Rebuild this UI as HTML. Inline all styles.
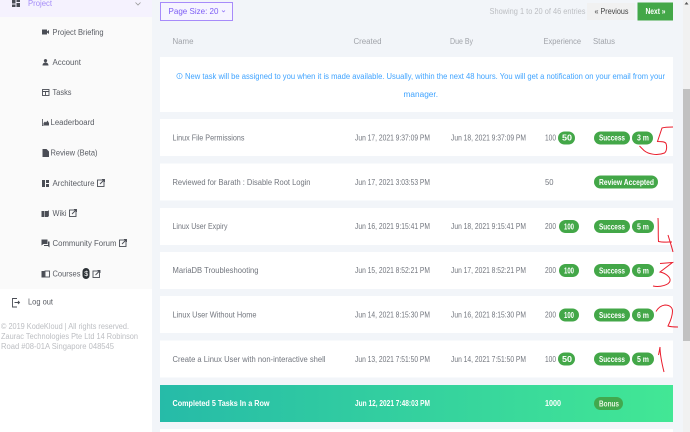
<!DOCTYPE html>
<html><head><meta charset="utf-8"><style>
html,body{margin:0;padding:0;width:690px;height:432px;overflow:hidden;background:#fff}
svg{display:block}
text{font-family:"Liberation Sans",sans-serif;font-size:8px}
.n{fill:#5a5d64}.g{fill:#72767e}.h{fill:#a0a3a9}.p{fill:#bcbec2}.w{fill:#fff;font-weight:bold}
.b{fill:#3fa3ff}.ic{fill:#4a4d55}.st{fill:none;stroke:#4a4d55;stroke-width:.9}
.red{fill:none;stroke:#ea1c2c;stroke-width:1}
</style></head><body>
<svg width="690" height="432" viewBox="0 0 690 432" xmlns="http://www.w3.org/2000/svg">
<defs><linearGradient id="gr" x1="0" x2="1" y1="0" y2="0"><stop offset="0" stop-color="#26bba8"/><stop offset="1" stop-color="#42e795"/></linearGradient></defs>
<rect width="690" height="432" fill="#fff"/>
<rect x="0" y="0" width="152" height="289" fill="#fafafa"/>
<rect x="0" y="0" width="152" height="17" fill="#f5f2fe"/>
<rect x="152" y="0" width="531" height="432" fill="#f2f5f9"/>
<rect x="683" y="0" width="7" height="432" fill="#f1f1f1"/>
<rect x="683" y="89" width="7" height="252" fill="#c1c1c1"/>
<path d="M684.5 4.5l2-2.500 2 2.500z" fill="#555"/>

<!-- sidebar -->
<path class="ic" d="M12 0h3.500v3.500h-3.500zM16.500 0h3.500v2h-3.500zM16.500 3h3.500v4h-3.500zM12 4.500h3.500v2.500h-3.500z"/>
<text x="28" y="6" textLength="24" lengthAdjust="spacingAndGlyphs" style="fill:#a48cf8">Project</text>
<path d="M135.500 2.500l2.500 2.500 2.500-2.500" fill="none" stroke="#999" stroke-width=".8"/>

<path class="ic" d="M42 29.500h5v5h-5zM47 31.500l2-1.500v4l-2-1.500z"/>
<text class="n" x="52.500" y="35" textLength="51" lengthAdjust="spacingAndGlyphs">Project Briefing</text>
<path class="ic" d="M45.500 59a1.700 1.700 0 1 1-.01 0zM42.500 65.500c0-4 6-4 6 0z"/>
<text class="n" x="52.500" y="65" textLength="28.500" lengthAdjust="spacingAndGlyphs">Account</text>
<rect class="st" x="42.500" y="89.500" width="6.500" height="6"/><path class="st" d="M42.500 91.500h6.500M45.500 91.500v4"/>
<text class="n" x="52.500" y="95" textLength="19" lengthAdjust="spacingAndGlyphs">Tasks</text>
<path class="ic" d="M42 119h.8v6.500H49v.5h-7zM43.500 125v-2l1.500-1.500 1 1 1.500-2 1.500 2.500v2z"/>
<text class="n" x="50.500" y="125" textLength="44" lengthAdjust="spacingAndGlyphs">Leaderboard</text>
<path class="ic" d="M42.500 149h4l2.500 2.500v5.500h-6.500z"/>
<text class="n" x="50.500" y="155.500" textLength="47" lengthAdjust="spacingAndGlyphs">Review (Beta)</text>
<path class="ic" d="M42 180h3v7h-3zM46 180h3v3h-3zM46 184h3v3h-3z"/>
<text class="n" x="52.500" y="186" textLength="42" lengthAdjust="spacingAndGlyphs">Architecture</text>
<rect class="st" x="97.500" y="180" width="6.500" height="6.500"/><path class="st" d="M100 184l4-4M102 179.500h2.500v2.500"/>
<path class="ic" d="M41.500 211h3v6h-3zM45 211h3v6h-3z"/><path class="st" d="M48.500 210.500v6"/>
<text class="n" x="52.500" y="216" textLength="14" lengthAdjust="spacingAndGlyphs">Wiki</text>
<rect class="st" x="69.500" y="210" width="6.500" height="6.500"/><path class="st" d="M72 214l4-4M74 209.500h2.500v2.500"/>
<path class="ic" d="M41.500 239.500h6v4.500h-4l-2 1.500zM48 241.500h1.500v6l-1.500-1.500h-4v-1h4z"/>
<text class="n" x="52.500" y="246" textLength="64" lengthAdjust="spacingAndGlyphs">Community Forum</text>
<rect class="st" x="119.500" y="240" width="6.500" height="6.500"/><path class="st" d="M122 244l4-4M124 239.500h2.500v2.500"/>
<path class="ic" d="M41.500 271h3.200v6.500h-3.200z"/><rect class="st" x="45" y="271" width="4.500" height="6"/>
<text class="n" x="52.500" y="276.500" textLength="28" lengthAdjust="spacingAndGlyphs">Courses</text>
<rect x="82.500" y="268" width="7" height="11" rx="3.500" fill="#2c3136"/>
<text x="84.300" y="276" fill="#fff" style="font-size:7px">$</text>
<rect class="st" x="93" y="271" width="6.500" height="6.500"/><path class="st" d="M95.500 275l4-4M97.500 270.500h2.500v2.500"/>
<path class="st" d="M17 298.500h-4.500v8.500h4.500"/><path class="st" d="M14.500 302.500h5M18 301l1.500 1.500L18 304"/>
<text class="n" x="28" y="304.500" textLength="25" lengthAdjust="spacingAndGlyphs">Log out</text>
<text class="p" x="1" y="329" textLength="128" lengthAdjust="spacingAndGlyphs">© 2019 KodeKloud | All rights reserved.</text>
<text class="p" x="1" y="339" textLength="137" lengthAdjust="spacingAndGlyphs">Zaurac Technologies Pte Ltd 14 Robinson</text>
<text class="p" x="1" y="349" textLength="113" lengthAdjust="spacingAndGlyphs">Road #08-01A Singapore 048545</text>

<!-- top bar -->
<rect x="160.500" y="2.500" width="72" height="18" fill="#f6f5ff" stroke="#a78bfa"/>
<text x="168.500" y="14" style="fill:#7c5cf5;font-size:8.500px" textLength="50" lengthAdjust="spacingAndGlyphs">Page Size: 20</text>
<path d="M222 10.500l1.500 1.500 1.500-1.500" fill="none" stroke="#7c5cf5" stroke-width=".6"/>
<text class="p" x="489.500" y="14" textLength="96" lengthAdjust="spacingAndGlyphs">Showing 1 to 20 of 46 entries</text>
<rect x="587" y="3" width="48" height="17" fill="#f1f1f1"/>
<text x="594.500" y="14" fill="#444" textLength="34" lengthAdjust="spacingAndGlyphs">« Previous</text>
<rect x="637.500" y="2.500" width="35.500" height="18" fill="#43a748"/>
<text class="w" x="645.500" y="14" textLength="20" lengthAdjust="spacingAndGlyphs">Next »</text>

<!-- header -->
<text class="h" x="172.500" y="44" textLength="21" lengthAdjust="spacingAndGlyphs">Name</text>
<text class="h" x="353.500" y="44" textLength="28" lengthAdjust="spacingAndGlyphs">Created</text>
<text class="h" x="450" y="44" textLength="23" lengthAdjust="spacingAndGlyphs">Due By</text>
<text class="h" x="543.500" y="44" textLength="37.500" lengthAdjust="spacingAndGlyphs">Experience</text>
<text class="h" x="593" y="44" textLength="22" lengthAdjust="spacingAndGlyphs">Status</text>

<!-- info -->
<rect x="160" y="57" width="513" height="55" fill="#fff"/>
<circle cx="179.500" cy="76" r="2.700" fill="none" stroke="#3fa3ff" stroke-width=".6"/>
<path d="M179.500 75v2.500M179.500 74v.5" stroke="#3fa3ff" stroke-width=".5"/>
<text class="b" x="185" y="79" textLength="480" lengthAdjust="spacingAndGlyphs">New task will be assigned to you when it is made available. Usually, within the next 48 hours. You will get a notification on your email from your</text>
<text class="b" x="403.500" y="97" textLength="34.500" lengthAdjust="spacingAndGlyphs">manager.</text>

<!-- rows -->
<rect x="160" y="119" width="513" height="37" fill="#fff"/>
<rect x="160" y="163.500" width="513" height="37" fill="#fff"/>
<rect x="160" y="208" width="513" height="37" fill="#fff"/>
<rect x="160" y="252" width="513" height="37" fill="#fff"/>
<rect x="160" y="296" width="513" height="37" fill="#fff"/>
<rect x="160" y="340.500" width="513" height="37" fill="#fff"/>
<rect x="160" y="385" width="513" height="37" fill="url(#gr)"/>
<rect x="160" y="429" width="513" height="3" fill="#fff"/>

<text class="g" x="172.500" y="140.500" textLength="72" lengthAdjust="spacingAndGlyphs">Linux File Permissions</text>
<text class="g" x="355" y="140.500" textLength="75" lengthAdjust="spacingAndGlyphs">Jun 17, 2021 9:37:09 PM</text>
<text class="g" x="451" y="140.500" textLength="75" lengthAdjust="spacingAndGlyphs">Jun 18, 2021 9:37:09 PM</text>
<text class="g" x="545" y="140.500" textLength="11" lengthAdjust="spacingAndGlyphs">100</text>

<text class="g" x="172.500" y="185" textLength="138" lengthAdjust="spacingAndGlyphs">Reviewed for Barath : Disable Root Login</text>
<text class="g" x="355" y="185" textLength="75" lengthAdjust="spacingAndGlyphs">Jun 17, 2021 3:03:53 PM</text>
<text class="g" x="545" y="185" textLength="8.500" lengthAdjust="spacingAndGlyphs">50</text>

<text class="g" x="172.500" y="229" textLength="55" lengthAdjust="spacingAndGlyphs">Linux User Expiry</text>
<text class="g" x="355" y="229" textLength="75" lengthAdjust="spacingAndGlyphs">Jun 16, 2021 9:15:41 PM</text>
<text class="g" x="451" y="229" textLength="75" lengthAdjust="spacingAndGlyphs">Jun 18, 2021 9:15:41 PM</text>
<text class="g" x="545" y="229" textLength="11" lengthAdjust="spacingAndGlyphs">200</text>

<text class="g" x="172.500" y="273" textLength="86" lengthAdjust="spacingAndGlyphs">MariaDB Troubleshooting</text>
<text class="g" x="355" y="273" textLength="75" lengthAdjust="spacingAndGlyphs">Jun 15, 2021 8:52:21 PM</text>
<text class="g" x="451" y="273" textLength="75" lengthAdjust="spacingAndGlyphs">Jun 17, 2021 8:52:21 PM</text>
<text class="g" x="545" y="273" textLength="11" lengthAdjust="spacingAndGlyphs">200</text>

<text class="g" x="172.500" y="317.500" textLength="84" lengthAdjust="spacingAndGlyphs">Linux User Without Home</text>
<text class="g" x="355" y="317.500" textLength="75" lengthAdjust="spacingAndGlyphs">Jun 14, 2021 8:15:30 PM</text>
<text class="g" x="451" y="317.500" textLength="75" lengthAdjust="spacingAndGlyphs">Jun 16, 2021 8:15:30 PM</text>
<text class="g" x="545" y="317.500" textLength="11" lengthAdjust="spacingAndGlyphs">200</text>

<text class="g" x="172.500" y="362" textLength="153" lengthAdjust="spacingAndGlyphs">Create a Linux User with non-interactive shell</text>
<text class="g" x="355" y="362" textLength="75" lengthAdjust="spacingAndGlyphs">Jun 13, 2021 7:51:50 PM</text>
<text class="g" x="451" y="362" textLength="75" lengthAdjust="spacingAndGlyphs">Jun 14, 2021 7:51:50 PM</text>
<text class="g" x="545" y="362" textLength="11" lengthAdjust="spacingAndGlyphs">100</text>

<text class="w" x="172.500" y="406" textLength="97" lengthAdjust="spacingAndGlyphs">Completed 5 Tasks In a Row</text>
<text class="w" x="355" y="406" textLength="75" lengthAdjust="spacingAndGlyphs">Jun 12, 2021 7:48:03 PM</text>
<text class="w" x="545" y="406" textLength="16" lengthAdjust="spacingAndGlyphs">1000</text>

<!-- pills -->
<g fill="#43a748">
<rect x="558" y="131.500" width="17" height="13" rx="6.500"/>
<rect x="594" y="131.500" width="36" height="13" rx="6.500"/>
<rect x="632" y="131.500" width="21" height="13" rx="6.500"/>
<rect x="594" y="175.500" width="64" height="13" rx="6.500"/>
<rect x="559" y="220" width="20" height="13" rx="6.500"/>
<rect x="594" y="220" width="36" height="13" rx="6.500"/>
<rect x="632" y="220" width="22" height="13" rx="6.500"/>
<rect x="559" y="264" width="20" height="13" rx="6.500"/>
<rect x="594" y="264" width="36" height="13" rx="6.500"/>
<rect x="632" y="264" width="22" height="13" rx="6.500"/>
<rect x="559" y="308.500" width="20" height="13" rx="6.500"/>
<rect x="594" y="308.500" width="36" height="13" rx="6.500"/>
<rect x="632" y="308.500" width="22" height="13" rx="6.500"/>
<rect x="558" y="352.500" width="17" height="13" rx="6.500"/>
<rect x="594" y="352.500" width="36" height="13" rx="6.500"/>
<rect x="632" y="352.500" width="22" height="13" rx="6.500"/>
</g>
<rect x="594" y="397" width="29" height="13" rx="6.500" fill="#41a94e"/>
<g style="font-size:7.500px">
<text class="w" x="562" y="140.500" textLength="10" lengthAdjust="spacingAndGlyphs">50</text>
<text class="w" x="599" y="140.500" textLength="26" lengthAdjust="spacingAndGlyphs">Success</text>
<text class="w" x="637" y="140.500" textLength="12" lengthAdjust="spacingAndGlyphs">3 m</text>
<text class="w" x="599" y="185" textLength="55" lengthAdjust="spacingAndGlyphs">Review Accepted</text>
<text class="w" x="564" y="229.500" textLength="10" lengthAdjust="spacingAndGlyphs">100</text>
<text class="w" x="599" y="229.500" textLength="26" lengthAdjust="spacingAndGlyphs">Success</text>
<text class="w" x="637" y="229.500" textLength="12" lengthAdjust="spacingAndGlyphs">5 m</text>
<text class="w" x="564" y="273.500" textLength="10" lengthAdjust="spacingAndGlyphs">100</text>
<text class="w" x="599" y="273.500" textLength="26" lengthAdjust="spacingAndGlyphs">Success</text>
<text class="w" x="637" y="273.500" textLength="12" lengthAdjust="spacingAndGlyphs">6 m</text>
<text class="w" x="564" y="318" textLength="10" lengthAdjust="spacingAndGlyphs">100</text>
<text class="w" x="599" y="318" textLength="26" lengthAdjust="spacingAndGlyphs">Success</text>
<text class="w" x="637" y="318" textLength="12" lengthAdjust="spacingAndGlyphs">6 m</text>
<text class="w" x="562" y="362" textLength="10" lengthAdjust="spacingAndGlyphs">50</text>
<text class="w" x="599" y="362" textLength="26" lengthAdjust="spacingAndGlyphs">Success</text>
<text class="w" x="637" y="362" textLength="12" lengthAdjust="spacingAndGlyphs">5 m</text>
<text class="w" x="599" y="406.500" textLength="20" lengthAdjust="spacingAndGlyphs" style="fill:#e6f5e0">Bonus</text>
</g>

<!-- red annotations -->
<path class="red" d="M673 127C669 127 665 127 662 128L657.500 141.500C661 141.500 665 141.500 666 143.500C667 146 667 151 664.500 153C657 156 648 154 644 150.500L639.500 146"/>
<path class="red" d="M658 218C658.500 226 658 235 658.500 241.500C663 242.500 668 242 672 242M668 235C669.500 240 671.500 246 673 252"/>
<path class="red" d="M660 263.500L672.500 262.500C668 266 664 269 660 272C665 273 671 277 670 281C669 285 660 287.500 653 286"/>
<path class="red" d="M656 311.500C658 308 661 305.500 665 305C669 305 672.500 307 672.500 311C672.500 316 670 322 668 326C671 327 675 327 678 327"/>
<path class="red" d="M660 347C659.500 350 659 353 658.500 355M660 347C660 355 662 364 664 372"/>
</svg>
</body></html>
